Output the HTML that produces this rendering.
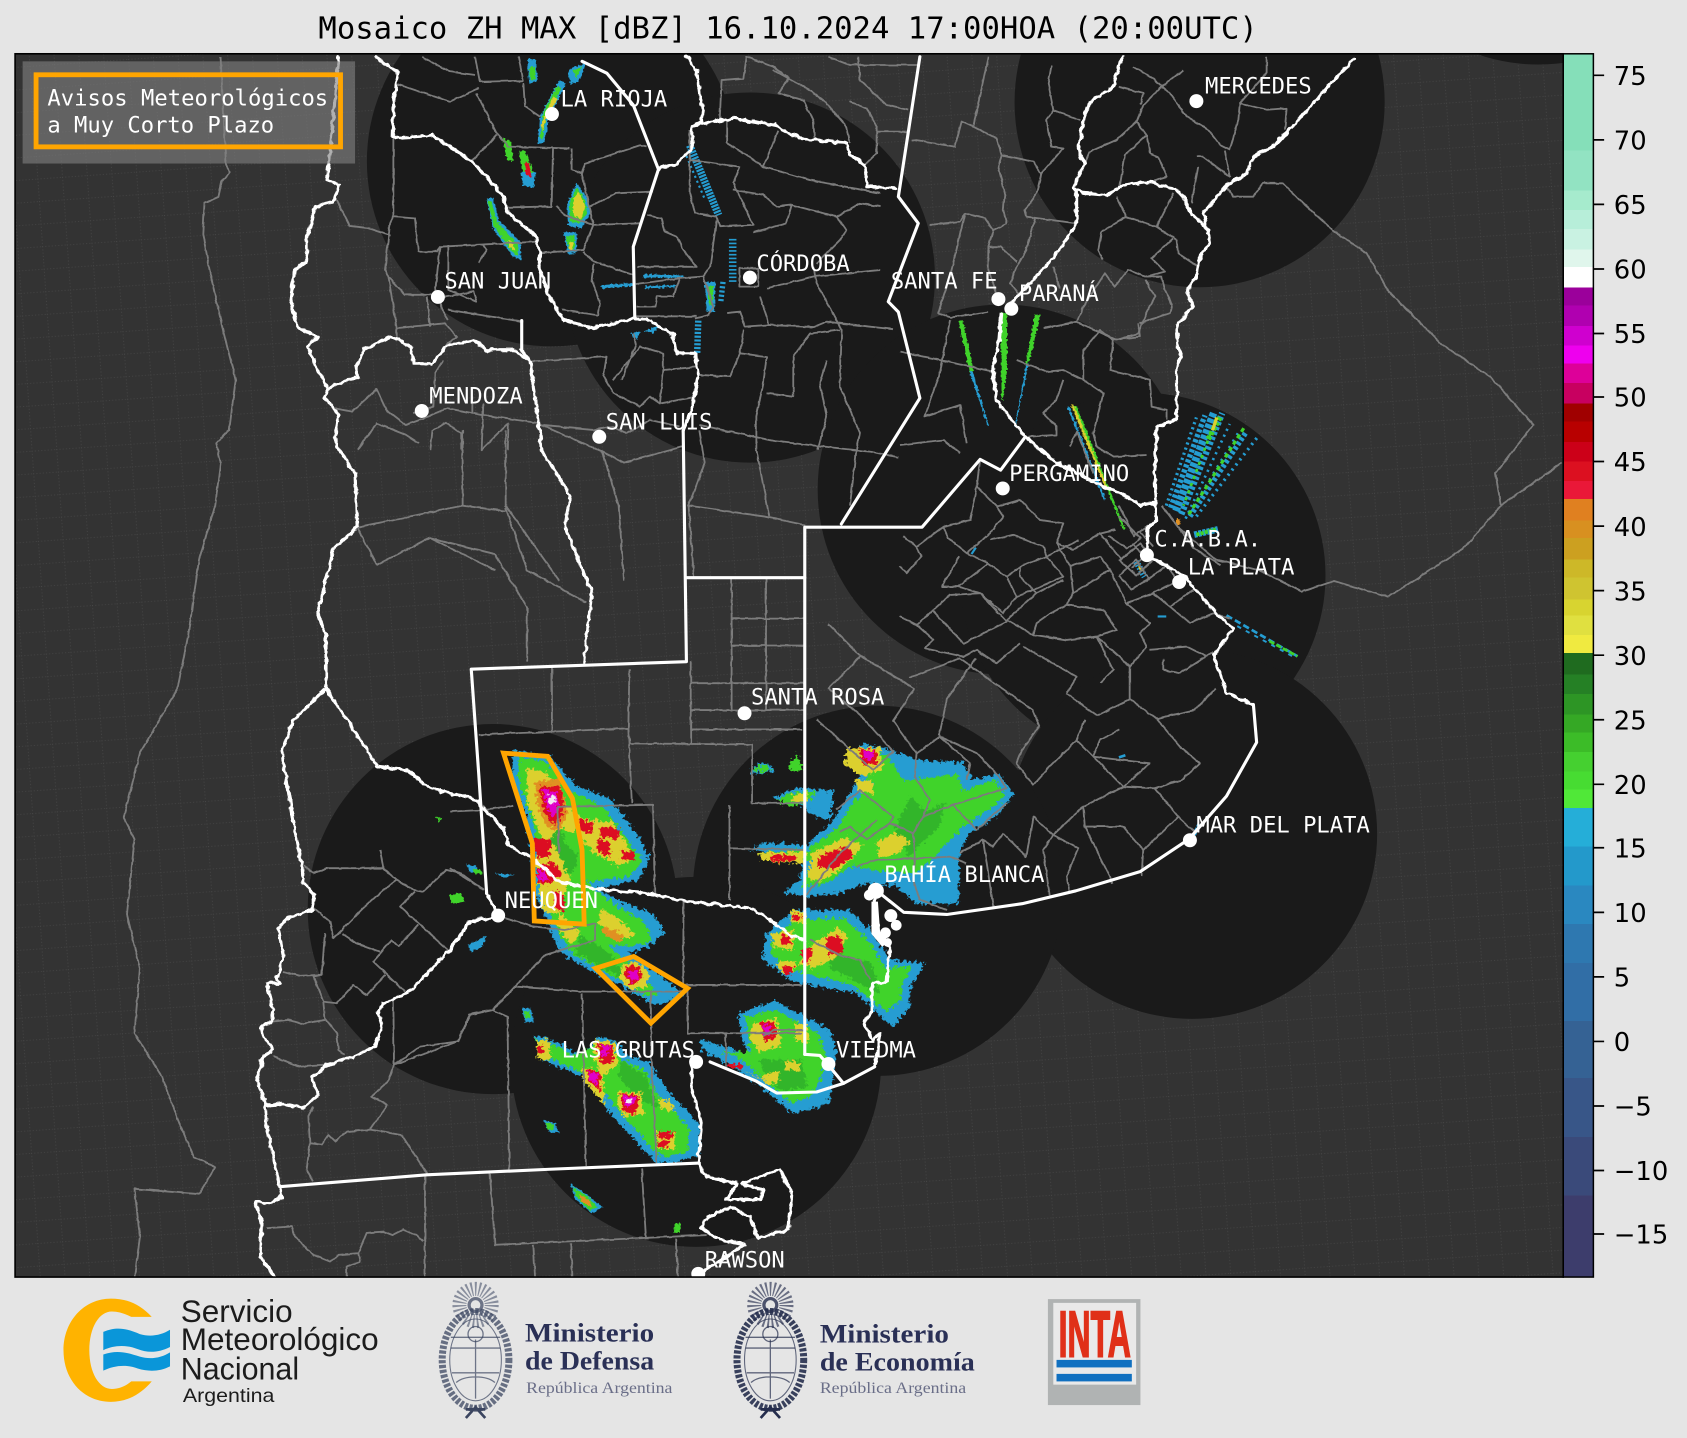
<!DOCTYPE html>
<html lang="es"><head><meta charset="utf-8"><title>Mosaico ZH MAX</title>
<style>
html,body{margin:0;padding:0;background:#e5e5e5;width:1687px;height:1438px;overflow:hidden}
svg{display:block;width:1687px;height:1438px}
.gray path{fill:none;stroke:#7c7c7c;stroke-width:1.7;stroke-linejoin:round}
.white path{fill:none;stroke:#fff;stroke-width:2.9;stroke-linejoin:round;stroke-linecap:round}
.lab{font-family:"DejaVu Sans Mono","Liberation Mono",monospace;font-size:20.6px;fill:#fff}
.tick{font-family:"DejaVu Sans","Liberation Sans",sans-serif;font-size:24px;fill:#000}
.b{fill:#259dd2}.bd{fill:#2b86bf}.g{fill:#3fd32c}.gm{fill:#33b52a}.d{fill:#2b8f28}.y{fill:#dcd02e}.o{fill:#e09020}.r{fill:#dc0a22}.m{fill:#e000c8}.w{fill:#f4e8f4}
.sb path{fill:none;stroke:#259dd2}.sg path{fill:none;stroke:#3fd32c}
</style></head><body>
<svg viewBox="0 0 1568 1336.6" xmlns="http://www.w3.org/2000/svg">
<defs>
<clipPath id="map"><rect x="14" y="50" width="1439" height="1137"/></clipPath>
<pattern id="grid" width="23" height="21" patternUnits="userSpaceOnUse" patternTransform="rotate(-4)">
<path d="M0,.5H23M.5,0V21" stroke="#484848" stroke-width=".7" stroke-dasharray="1 2" fill="none"/>
</pattern>
<filter id="rough" filterUnits="userSpaceOnUse" x="0" y="0" width="1568" height="1337">
<feTurbulence type="fractalNoise" baseFrequency=".3" numOctaves="3" seed="7"/>
<feDisplacementMap in="SourceGraphic" scale="9" xChannelSelector="R" yChannelSelector="G"/>
</filter>
<filter id="rough2" filterUnits="userSpaceOnUse" x="0" y="0" width="1568" height="1337">
<feTurbulence type="fractalNoise" baseFrequency=".5" numOctaves="1" seed="3"/>
<feDisplacementMap in="SourceGraphic" scale="4" xChannelSelector="R" yChannelSelector="G"/>
</filter>
<filter id="wig" filterUnits="userSpaceOnUse" x="0" y="0" width="1568" height="1337">
<feTurbulence type="fractalNoise" baseFrequency=".16" numOctaves="2" seed="11"/>
<feDisplacementMap in="SourceGraphic" scale="4.5" xChannelSelector="R" yChannelSelector="G"/>
</filter>
<filter id="wig2" filterUnits="userSpaceOnUse" x="0" y="0" width="1568" height="1337">
<feTurbulence type="fractalNoise" baseFrequency=".14" numOctaves="2" seed="5"/>
<feDisplacementMap in="SourceGraphic" scale="2.2" xChannelSelector="R" yChannelSelector="G"/>
</filter>
</defs>
<rect width="1568" height="1337" fill="#e5e5e5"/>
<g clip-path="url(#map)">
<rect x="14" y="50" width="1439" height="1137" fill="#333"/>
<rect x="14" y="50" width="1439" height="1137" fill="url(#grid)"/>
<g fill="#1a1a1a">
<circle cx="1115" cy="95" r="172"/><circle cx="1430" cy="-112" r="172"/><circle cx="513" cy="150" r="172"/>
<circle cx="697" cy="258" r="172"/><circle cx="932" cy="455" r="172"/><circle cx="1062" cy="535" r="170"/>
<circle cx="1108" cy="775" r="172"/><circle cx="816" cy="828" r="172"/><circle cx="458" cy="845" r="172"/>
<circle cx="647" cy="987" r="172"/>
</g>

<!-- radar echoes -->
<g filter="url(#rough)">
<!-- Neuquen main -->
<path class="b" d="M478,697 512,703 535,730 568,743 592,775 604,797 594,818 556,826 572,835 608,850 618,868 603,880 585,886 612,905 636,925 610,935 575,915 545,900 520,885 510,860 497,830 493,790 490,760 475,725Z"/>
<path class="g" d="M482,702 508,708 530,735 560,750 585,782 597,800 585,815 545,820 570,840 600,858 606,875 585,880 565,878 590,900 612,925 600,925 565,905 530,885 516,860 500,825 497,770 482,725Z"/>
<path class="gm" d="M515,760 530,790 525,815 507,810 505,770Z"/>
<path class="gm" d="M540,870 565,885 590,915 560,900 535,885Z"/>
<path class="y" d="M490,714 508,718 524,745 540,760 535,775 520,770 508,785 500,770 490,745Z"/>
<path class="y" d="M535,760 570,765 590,798 575,805 555,795 540,780Z"/>
<path class="y" d="M498,780 515,785 530,815 520,848 505,848 498,810Z"/>
<path class="gm" d="M525,785 538,795 532,812 524,808Z"/>
<path class="y" d="M560,845 580,858 590,870 575,872 556,858Z"/>
<path class="y" d="M520,848 540,868 530,878 518,860Z"/>
<path class="o" d="M497,727 520,724 528,755 520,772 508,768 500,750Z"/>
<path class="r" d="M501,730 522,732 524,755 516,768 506,755Z"/>
<path class="m" d="M504,733 518,736 519,752 514,760 508,750Z"/>
<path class="w" d="M510,738 516,740 516,748 510,748Z"/>
<path class="r" d="M538,762 552,764 550,775 538,772Z"/>
<path class="r" d="M558,768 576,770 574,780 558,778Z"/>
<path class="r" d="M555,780 566,782 568,796 556,792Z"/>
<path class="r" d="M578,790 590,792 590,800 578,798Z"/>
<path class="r" d="M496,778 512,782 510,798 498,796Z"/>
<path class="r" d="M498,808 514,800 522,812 510,822 500,820Z"/>
<path class="m" d="M500,810 508,808 508,818 500,818Z"/>
<path class="r" d="M515,828 525,832 524,848 515,844Z"/>
<path class="o" d="M560,860 580,870 575,876 560,868Z"/>
<!-- Cell B -->
<path class="y" d="M578,896 592,894 604,906 600,918 586,920 576,910Z"/>
<path class="r" d="M582,898 594,898 598,908 588,916 580,908Z"/>
<path class="m" d="M584,902 593,902 594,910 586,912Z"/>
<!-- Las Grutas -->
<path class="b" d="M496,962 523,970 539,982 557,964 572,968 583,980 604,988 620,1013 651,1046 651,1072 629,1081 610,1081 601,1072 570,1038 542,1001 505,986Z"/>
<path class="g" d="M498,966 520,973 533,982 560,968 570,972 578,985 598,994 612,1018 640,1048 640,1070 620,1076 608,1070 575,1032 550,1002 508,982Z"/>
<path class="gm" d="M578,985 600,1000 612,1030 590,1020 575,1000Z"/>
<path class="y" d="M553,966 572,970 574,990 560,1000 552,985Z"/>
<path class="y" d="M542,992 560,996 562,1028 552,1015 542,1005Z"/>
<path class="y" d="M575,1014 596,1016 598,1036 580,1038 574,1025Z"/>
<path class="y" d="M610,1052 628,1052 628,1068 612,1068Z"/>
<path class="y" d="M612,1020 626,1025 626,1033 614,1030Z"/>
<path class="y" d="M498,968 510,966 512,985 500,985Z"/>
<path class="r" d="M555,970 570,972 570,988 558,988Z"/>
<path class="m" d="M558,972 566,972 566,982 560,982Z"/>
<path class="r" d="M546,994 558,996 558,1014 548,1006Z"/>
<path class="m" d="M547,996 556,998 555,1008 549,1004Z"/>
<path class="r" d="M576,1016 594,1018 592,1032 590,1036 580,1034Z"/>
<path class="m" d="M578,1018 592,1020 588,1028 582,1030Z"/>
<path class="w" d="M581,1020 587,1022 586,1025 581,1024Z"/>
<path class="r" d="M612,1052 626,1052 626,1058 612,1058Z"/>
<path class="r" d="M612,1060 622,1062 618,1068 612,1066Z"/>
<path class="r" d="M500,972 505,972 505,978 500,978Z"/>
<!-- Viedma -->
<path class="b" d="M686,942 720,930 771,957 778,979 773,1010 770,1026 737,1035 703,1007 678,990 652,975 650,966 680,975 697,982 688,960Z"/>
<path class="g" d="M693,945 720,938 760,960 768,982 762,1005 755,1018 735,1025 710,1003 690,985 670,978 698,978 695,962Z"/>
<path class="gm" d="M705,985 745,985 750,1010 730,1015 712,1002Z"/>
<path class="y" d="M699,952 722,946 726,972 706,978 697,965Z"/>
<path class="y" d="M738,950 750,952 752,970 740,968Z"/>
<path class="y" d="M670,985 700,1000 715,1005 690,995Z"/>
<path class="y" d="M730,985 745,988 742,996 730,994Z"/>
<path class="y" d="M708,1000 725,995 724,1005 712,1008Z"/>
<path class="r" d="M706,950 720,950 722,964 710,968Z"/>
<path class="m" d="M708,953 716,953 716,961 710,962Z"/>
<path class="r" d="M676,988 690,990 690,994 678,992Z"/>
<!-- Bahia N -->
<path class="b" d="M802,691 827,697 852,706 895,709 905,725 929,719 942,739 926,759 901,775 892,793 891,840 852,840 833,824 805,821 781,830 750,833 728,830 743,818 748,795 697,790 710,783 750,785 775,762 785,745 800,720 785,708Z"/>
<path class="g" d="M803,695 825,702 840,725 890,720 895,735 925,725 935,740 920,752 893,770 865,800 850,812 820,810 790,805 770,820 745,825 755,800 720,800 705,792 750,790 778,770 793,745 812,730 800,715 787,708Z"/>
<path class="gm" d="M846,740 860,755 880,745 872,770 845,795 830,775Z"/>
<path class="y" d="M815,782 832,774 846,782 834,794 817,798Z"/>
<path class="y" d="M755,792 785,778 802,786 782,808 762,820 750,816Z"/>
<path class="y" d="M788,695 818,695 820,716 800,722 785,710Z"/>
<path class="y" d="M706,792 750,792 746,803 708,800Z"/>
<path class="r" d="M762,795 788,787 793,795 775,808 760,806Z"/>
<path class="r" d="M716,795 740,795 738,801 718,800Z"/>
<path class="r" d="M798,697 815,697 815,710 803,712Z"/>
<path class="m" d="M802,698 812,698 811,706 804,706Z"/>
<path class="y" d="M795,725 810,725 812,738 798,735Z"/>
<path class="b" d="M718,742 740,732 775,735 772,762 755,758 745,748Z"/>
<path class="g" d="M722,744 738,736 760,736 750,745 735,750Z"/>
<path class="y" d="M735,740 750,736 752,745 738,746Z"/>
<path class="b" d="M697,716 710,708 720,716 700,720Z"/>
<path class="g" d="M699,715 712,710 716,716 702,718Z"/>
<path class="g" d="M733,712 741,700 746,716 735,718Z"/>
<!-- Bahia S -->
<path class="b" d="M737,846 790,846 812,868 827,892 860,895 846,917 846,936 830,954 815,942 796,923 759,917 734,911 709,892 712,868Z"/>
<path class="g" d="M740,855 785,853 808,875 822,900 848,898 838,915 838,928 825,940 812,932 792,915 762,908 738,902 716,888 718,870Z"/>
<path class="gm" d="M770,885 810,895 818,925 795,912 772,900Z"/>
<path class="y" d="M752,880 778,862 788,870 778,890 755,900 742,896Z"/>
<path class="y" d="M716,868 738,865 738,883 720,880Z"/>
<path class="y" d="M735,846 750,848 748,858 735,858Z"/>
<path class="y" d="M722,894 740,894 738,906 726,904Z"/>
<path class="r" d="M768,872 782,870 784,886 770,888Z"/>
<path class="r" d="M725,870 735,868 736,878 726,878Z"/>
<path class="r" d="M745,882 755,882 752,895 745,893Z"/>
<path class="r" d="M727,898 738,898 736,906 728,905Z"/>
<path class="r" d="M736,850 746,850 745,855 737,855Z"/>
</g>
<g filter="url(#rough2)">
<path class="b" d="M433,803 442,805 445,810 437,811Z"/>
<path class="g" d="M418,832 428,830 432,838 420,840Z"/>
<path class="b" d="M435,878 452,870 448,880 438,885Z"/>
<path class="g" d="M405,759 411,761 408,765Z"/>
<path class="g" d="M440,808 446,808 448,812 441,812Z"/>
<path class="b" d="M460,812 478,813 470,816Z"/>
<path class="b" d="M485,936 494,938 496,950 488,950Z"/>
<path class="g" d="M487,940 492,940 493,946 488,946Z"/>
<path class="b" d="M505,1041 516,1044 520,1053 510,1052Z"/>
<path class="g" d="M507,1043 514,1045 515,1051 509,1050Z"/>
<path class="b" d="M530,1100 545,1110 560,1122 550,1128 535,1115Z"/>
<path class="g" d="M532,1103 546,1112 555,1122 548,1125 535,1112Z"/>
<path class="o" d="M538,1110 548,1116 550,1122 541,1117Z"/>
<path class="g" d="M627,1137 632,1137 632,1146 627,1146Z"/>
<!-- La Rioja / San Juan streaks -->
<path class="b" d="M490,55 498,55 500,75 492,78Z"/>
<path class="g" d="M492,62 497,62 498,74 493,74Z"/>
<path class="b" d="M528,65 545,58 538,76 530,78Z"/>
<path class="g" d="M532,66 541,62 536,72Z"/>
<path class="b" d="M520,74 526,78 510,110 506,132 500,134 502,108Z"/>
<path class="g" d="M518,80 522,82 508,108 504,130 502,128 505,104Z"/>
<path class="y" d="M514,90 518,92 507,112 504,122 503,116Z"/>
<path class="g" d="M467,128 475,132 477,150 471,148Z"/>
<path class="g" d="M482,140 488,140 496,160 496,170 488,170Z"/>
<path class="b" d="M484,160 498,160 496,175 486,172Z"/>
<path class="r" d="M488,150 492,152 494,165 489,162Z"/>
<path class="b" d="M527,190 536,170 546,185 549,198 540,212 528,210Z"/>
<path class="g" d="M529,190 536,174 544,186 546,198 538,208 530,206Z"/>
<path class="y" d="M533,185 538,178 544,192 540,204 533,200Z"/>
<path class="b" d="M524,216 536,216 536,235 528,236Z"/>
<path class="g" d="M526,220 534,218 534,232 529,232Z"/>
<path class="y" d="M529,225 533,225 532,232 529,232Z"/>
<path class="b" d="M452,184 458,184 464,205 484,225 484,242 476,238 458,212Z"/>
<path class="g" d="M453,186 457,188 462,206 482,228 481,238 474,232 459,210Z"/>
<path class="y" d="M472,222 477,226 478,232 473,230Z"/>
<path class="b" d="M558,265 588,263 588,266 560,268Z"/>
<path class="b" d="M598,255 636,256 636,258 598,258Z"/>
<path class="b" d="M600,266 628,265 628,267 600,268Z"/>
<path class="b" d="M655,262 665,262 664,290 657,290Z"/>
<path class="g" d="M658,266 663,266 662,284 659,284Z"/>
<path class="b" d="M598,308 612,303 608,310Z"/>
<path class="b" d="M586,310 595,308 592,316Z"/>
<!-- rays -->
<path class="g" d="M891,299 895,298 905,345 901,346Z"/>
<path class="b" d="M901,345 904,345 919,396 918,396Z"/>
<path class="g" d="M930,291 936,291 936,345 932,372 931,372Z"/>
<path class="g" d="M962,292 967,293 957,335 953,340Z"/>
<path class="b" d="M954,338 956,338 944,396 943,396Z"/>
<path class="g" d="M997,376 1001,378 1046,492 1044,492Z"/>
<path class="y" d="M995,376 998,376 1030,455 1028,455Z"/>
<path class="b" d="M992,378 994,378 1028,465 1026,465Z"/>
<path class="o" d="M1093,482 1097,482 1097,488 1093,488Z"/>
</g>
<!-- speckled fans -->
<g class="sb">
<path d="M641,135 668,200" stroke-width="7" stroke-dasharray="2 1"/>
<path d="M638,145 655,185" stroke-width="2" stroke-dasharray="2 3"/>
<path d="M681,222 681,262" stroke-width="7" stroke-dasharray="1.5 2"/>
<path d="M649,298 648,328" stroke-width="6" stroke-dasharray="2 1.5"/>
<path d="M672,262 670,280" stroke-width="5" stroke-dasharray="2 2"/>
<path d="M1084,470 1112,388" stroke-width="3" stroke-dasharray="2 3"/>
<path d="M1088,472 1120,386" stroke-width="5" stroke-dasharray="3 2"/>
<path d="M1093,475 1128,384" stroke-width="7" stroke-dasharray="4 1.5"/>
<path d="M1098,478 1136,384" stroke-width="6" stroke-dasharray="3 2"/>
<path d="M1102,482 1143,394" stroke-width="2.5" stroke-dasharray="2 4"/>
<path d="M1102,482 1152,400" stroke-width="2" stroke-dasharray="2 5"/>
<path d="M1106,480 1158,402" stroke-width="5" stroke-dasharray="3 2"/>
<path d="M1112,480 1169,406" stroke-width="3" stroke-dasharray="2 4"/>
<path d="M1110,497 1132,492" stroke-width="6" stroke-dasharray="3 1"/>
<path d="M1140,572 1206,610" stroke-width="2.5" stroke-dasharray="6 3"/>
<path d="M1150,582 1205,612" stroke-width="1.8" stroke-dasharray="4 5"/>
<path d="M1056,522 1064,536" stroke-width="6" stroke-dasharray="1.5 1.5"/>
<path d="M1076,573 1084,573" stroke-width="2"/><path d="M903,515 907,509" stroke-width="2"/><path d="M1040,704 1046,702" stroke-width="2.5"/><path d="M1110,776 1115,765" stroke-width="3.5" stroke-dasharray="3 1"/>
</g>
<g class="sg">
<path d="M1130,390 1100,470" stroke-width="2.5" stroke-dasharray="3 4"/>
<path d="M1134,388 1122,410" stroke-width="5" stroke-dasharray="3 2"/>
<path d="M1156,398 1105,478" stroke-width="3" stroke-dasharray="4 3"/>
<path d="M1112,497 1130,492" stroke-width="3.5" stroke-dasharray="3 1"/>
<path d="M1180,596 1206,610" stroke-width="2.5" stroke-dasharray="5 2"/>
</g>
<path d="M1131,388 1127,400" stroke="#dcd02e" stroke-width="3" fill="none"/>
<path d="M1059,526 1061,531" stroke="#dcd02e" stroke-width="2.5" fill="none"/>

<!-- gray outlines -->
<g class="gray" filter="url(#wig2)">
<!-- Chile coast -->
<path d="M205,53 210,152 213,160 206,169 203,183 190,189 188.5,217 196,257 208,310 219,353 213,400 201,412 205,430 200,470 185,520 175,590 165,640 130,700 115,760 125,780 118,850 130,900 125,960 150,1000 165,1040 180,1075 200,1085 185,1110 125,1105 130,1150 125,1187"/>
<path d="M313,186 325,210 342,212 363,219"/>
<!-- west top -->
<path d="M441.5,52.7 446,76 486.4,75 481.8,52.7"/><path d="M367,77.5 418,94.5 444.6,82"/><path d="M392,52.7 418,66.6 441.5,69.7"/>
<path d="M443,86.8 461.6,124 472.5,136.3 529.8,138"/><path d="M461.6,125.5 438.4,150"/><path d="M486.4,77.5 488,99 502,108.5"/>
<path d="M531.3,138 531.3,158 540.6,161 543.7,152 594.8,135 601,136"/><path d="M514,138 512.7,192 472.5,192.7"/>
<path d="M517,192 525,200 551.5,209 594.8,207.6"/><path d="M548.4,192 573,179.7 607,178"/><path d="M540.6,161 551.5,209 542,232.4 501.9,235"/>
<path d="M542,234 551.5,243 588.6,255.6"/><path d="M551.5,245 550,260 557.6,282 556,293 522,288"/>
<path d="M365.6,128.6 365.6,201.4 385.7,203 388.8,234 405.9,234 409,229.3 500.4,224.6"/>
<path d="M365.6,201.4 362.5,207.6 357.8,251 361,257 376.4,274 401,274"/>
<path d="M416.7,227.7 416.7,269.5 443,280.4 440,271 409,277"/><path d="M409,229 404.3,272.6"/><path d="M449,227.7 452.3,232.4 444.6,244.8"/>
<path d="M416.7,288 486.4,299"/><path d="M368.7,305 413.6,300.5 424.5,313 414,322"/><path d="M399.7,303.6 396.6,275.8"/><path d="M361,257 368.7,305 368.7,316"/>
<path d="M407.4,277 412,290 416.7,297.4"/><path d="M412,334.6 404.3,347 402.8,378 384,384"/>
<path d="M492.6,336 563.8,331.5 560.8,350 570,365.6 594.8,378 604,368.7 613.4,375 646,369"/>
<path d="M570,353 594.8,322 616.5,328.4 616.5,344 647.5,341"/><path d="M588.6,310 591,320 578,353"/><path d="M616.5,344 613.4,375"/>
<path d="M498.8,395 551.5,399.6 570,396.5 582.4,402.8 604,390.4 632,396.5"/><path d="M449.2,375 447.7,418 472.5,393.5 472,418"/>
<path d="M311,379.5 327,382.6 350,362 359,381 377,395 391,390 416,379.5 448,385.7 501.6,393.4"/>
<path d="M332.6,418 350,393.4 377,404 389.5,412"/><path d="M400,418 402,400 414.4,393 428.7,403 428.7,418"/><path d="M439,368.6 439,385"/>
<path d="M591.7,248 647.5,248 635,232.4 629,220 618,215.3 615,203 601,200"/>
<path d="M591,264 632,258.7 653.7,257"/><path d="M632,258.7 625.8,275.7 610.4,275.7 608.8,285 591.7,285"/><path d="M590,294 647.5,294"/>
<path d="M666,204.5 660,248 653.7,257 663,285 658,293 645.9,296"/>
<path d="M641,120.8 641,179.7 646,198 666,201.4 669,210.7 700,209 681.6,170.4 687.7,155 641,148.7"/>
<path d="M681.6,176.6 709.5,181 722,192 735.8,190.5 731,207.6 700,216"/><path d="M735.8,190.5 777.6,201.4 787,214 780.7,223 759,244.8"/>
<path d="M777.6,201.4 799.3,189 818,192"/><path d="M675.4,113 675.4,133 691,142.5 709.5,155 752.8,167.3 818,179.7"/><path d="M723.4,121 709.5,155"/>
<path d="M669,110 670.7,74.4 690.9,72.8 694,52.7"/><path d="M694,52.7 718.7,62 733,72 723.4,86.8 746.6,93 756,113 757,128"/>
<path d="M718.7,65 752.8,83.7 768.3,96 787,117.8 790,133"/><path d="M770,52.7 790,60.4 853.5,60.4"/>
<path d="M675.4,291 687.7,289.7 692.4,303.6 714,302 756,304 768.3,299 830,306"/><path d="M690.9,306.7 687.7,328.4 678.5,350 650.6,348.5"/>
<path d="M687.7,328.4 712.5,331.5 709.5,356 703,387 703,418"/><path d="M712.5,365.6 737.3,368.7 737.3,331.5 752.8,310 780.7,306.7"/>
<path d="M768.3,334.6 762,356 768.3,387 760,418"/><path d="M756,248 759,263.4 782.3,306.7 780.7,359.4 799.3,402.8 796,418"/>
<path d="M712.5,268 756,257 818,251"/><path d="M706.4,275.7 712.5,294 714,302"/>
<path d="M687.7,249.4H704.8V266.4H687.7Z"/>
<path d="M650,400 655,430 640,470 710,480 748,488"/><path d="M650,395 720,410 810,420 835,425"/><path d="M703,418 715,480"/><path d="M796,418 790,470"/>
<!-- NE -->
<path d="M797.7,52.7 799.3,74.4 824,97.6 844.2,102.3"/><path d="M790,94.5 805.5,100.7 814.8,117.8 814.8,142.5 804,153"/><path d="M814.8,122.4H844.2"/>
<path d="M847.3,130 887.6,136.3 893.8,113 904.6,117.8 926.3,128.6 931,144 927.9,155 934,179.7 932.5,195.2 935.6,207.6 923.2,213.8"/>
<path d="M904.6,117.8 918.6,52.7"/><path d="M931,144 960.4,150.3 968,162.7"/><path d="M864.3,209 892,206 896.9,198.3 915.5,203 923.2,213.8 918.6,229.3 918.6,251 926,272"/>
<path d="M896.9,198.3 883,257 872,291 884,295 918,290"/><path d="M918,229.3 930,229.3 945,243.2"/>
<path d="M977.4,60.4 974.3,77.5 979,102.3 972.8,111.6 977.4,136.3 988,138 968,161 963.5,179.7 952.6,195.2 954.2,201.4 1000.7,207.6"/>
<path d="M979,102.3 1003.8,111.6"/><path d="M962,203 954,232.4 945,248 938.7,263.4 951,277"/><path d="M979,247.9 985,268"/>
<path d="M1000.7,299 1006.9,285 1027,254 1036,266.5 1048.7,251 1064.2,257 1079.7,257 1082.8,269.5 1089,283.5 1087.4,291 1059.5,300.5"/>
<path d="M1064.2,260 1073.5,275.7 1065.7,291 1058,310 1037.8,316 1000.7,299 970,305"/>
<path d="M1025.4,241.7 1020.8,232.4 1024,215.3 1047,201.4 1075,210.7 1093.6,223 1095,235.5 1113.7,248"/><path d="M1047,201.4 1037.8,182.8"/><path d="M1075,210.7 1090.5,179.7"/>
<path d="M1090,222 1070.4,240 1082.8,252.5 1065,257"/>
<path d="M1053,62 1072,73 1087.4,86.8 1102.9,108.5 1123,120.8 1133.9,134.8 1143,139.4 1151,111.6 1152.4,96 1177.3,102 1195.8,100.7 1194.3,120.8"/>
<path d="M1177.3,52.7 1177.3,68 1152.4,96"/><path d="M1099.8,65 1078,82 1062.6,97.6 1056.4,113 1037.8,130 1013,141 1007,155"/>
<path d="M1039.4,80.6 1062.6,86.8 1060,97"/><path d="M1056.4,113 1065.7,125.5 1045.6,144 1041,172"/><path d="M1065.7,125.5 1068.8,142.5 1076.6,145.6 1084.3,164.2 1068.8,168.9"/>
<path d="M1112,145.6 1118,145.6 1143,164.2 1138,140"/><path d="M1113.7,155 1107.5,189"/>
<path d="M1140,173.5 1146.3,182.8 1164.8,182.8 1174,170.4 1192.7,170.4 1208,186 1240,215 1270,235 1290,270 1340,320 1385,350 1425,395 1390,440 1395,470 1452,430"/>
<path d="M1395,470 1360,510 1290,555 1240,540 1210,550 1170,530 1130,520 1095,490"/>
<!-- Santa Fe south / Pergamino -->
<path d="M883,297 873.7,347 859.7,387 892.3,376.4 898.5,412"/><path d="M836.5,326.8 873.7,334.6 923,345.4"/><path d="M836.5,413.6 876.8,409 892.3,421.3"/>
<path d="M945,334.6 972.8,345.4 988.3,344 1006.9,353 1006.9,325.3 1022.4,306.7 1034.8,316 1059.5,312.9 1058,300.5"/>
<path d="M1034.8,316 1031.7,343.9 1068.8,353 1070.4,378 1084.3,381 1084.3,390"/>
<path d="M1006.9,353 1025.5,365.5 1016,402.7 1019.3,415 1034.8,424.4 1065.7,422.9"/>
<path d="M988.3,353 982,371.7 969.7,384 982,396.5 982,404.3 953,406"/><path d="M994.5,415 1000.7,401 1016.2,440"/>
<path d="M1080,470 1110,510 1135,525"/>
<!-- BA partidos -->
<path d="M907.8,452.3 926.3,470.9 948,464.7 966.6,483.3 988.3,486.4 982,505 997.6,511.1 1022.4,495.7 1037,492"/>
<path d="M839.6,498.8 852,508 876.8,489.5 901.6,483.3 907.8,452.3 911,427"/><path d="M852,508 856.6,517.4 842.7,532.8 836,526"/>
<path d="M876.8,489.5 881.4,500.3 898.5,514.2 920.1,495.7 932.5,480.2 926.3,470.9"/><path d="M920,501.8 941.8,497.2 969.7,508 972.8,517.3 1003,502"/>
<path d="M898.5,514.2 918.6,523.5 890.7,545.2 875.2,545.2 892,517"/><path d="M918.6,523.5 935.6,536 944.9,554.5 932.5,570 910.8,551.4 890.7,545.2"/>
<path d="M867.5,566.9 883,553 910.8,551.4"/><path d="M867.5,566.9 852,580.8 836.5,573"/><path d="M867.5,568 895.4,597.9 935.6,577.8 910.8,551.4"/>
<path d="M852,580.8 867.5,594.8 859.7,602.5 895.4,610.3 907.8,604 926.3,616.5 948,597.9"/>
<path d="M935.6,536 948,526.6 972.8,517.3 988.3,536 944.9,554.5"/><path d="M948,526.6 948,536 963.5,551.4 988.3,539"/>
<path d="M963.5,551.4 935.6,576 960.4,590 963.5,579.3 979,568.4 991.4,562.2 1025.5,566.9"/><path d="M994.5,526.6 997.6,551.4 991.4,562"/>
<path d="M982,505 994.5,526.6 1022.4,517.4 1031.7,529.7 997.6,551.4"/>
<path d="M1025.5,566.9 1038,585.5 1019.3,591.7 1050.3,619.6 1065.7,601 1059.5,588.6 1068.8,579.3 1047,560.7 1031.7,529.7"/>
<path d="M1047,560.7 1072,551.4 1087.4,563.8 1109,548.3"/><path d="M960.4,590 991.4,594.8 1019.3,591.7 1034.8,622.7 1022.4,635"/>
<path d="M951,601 1000.7,628.9 991.4,644.3"/><path d="M1068.8,604 1103,601 1121.5,610.3"/><path d="M1087.4,563.8 1106,579.3 1127.7,570 1143,575"/>
<path d="M1081.2,613.4 1081.2,622.7 1096.7,625.8 1127.7,606"/><path d="M1050,620 1050,650 1075,668 1110,660 1130,640"/><path d="M991,645 1020,665 1050,650"/>
<path d="M1040,470 1054,498 1066,490"/><path d="M1030,498 1048,510 1060,500 1040,480"/><path d="M1022,495 1042,520 1060,505 1072,520 1056,535 1040,520"/><path d="M1040,535 1056,520 1068,538 1052,548 1040,535"/><path d="M1068,538 1085,525 1094,540 1072,551"/><path d="M1052,505 1064,517 1052,528"/><path d="M1060,495 1072,508"/>
<!-- BA south -->
<path d="M770,580 800,610 770,640 800,665 830,698.6 811.6,715.7 774,682 759,669"/><path d="M800,610 850,640 830,670 851.9,700 873.6,684.7 901.5,709.5 898.4,725"/>
<path d="M845,630 892,612 960,660 966,675 950,697 945,710"/><path d="M873.6,684.7 907.7,700 926,718.8 935.5,732.7 886,748 907.7,771.4 935.5,746.6"/><path d="M907,612 880,650 873,684"/>
<path d="M851.9,700 850.3,721.9 864.3,743.5 858,759 886,748"/><path d="M777.5,752.8 799.2,734.3 830,759 827,765.2 805.4,780.7 790,768.3 781,773"/>
<path d="M827,765.2 848.8,774.5 850.3,793 848.8,818 855,836.5 879.8,845.8"/><path d="M858,759 848.8,774.5"/><path d="M780.6,793 749.7,831.8"/><path d="M780.6,793 815,762"/>
<path d="M796,805.5 814.7,799.3 850,798 882.9,796.2 898.4,802.4"/><path d="M752.8,873.7 780.6,887.6 799.2,892.2 808.5,910.8"/>
<path d="M746.6,957.3H718.7L709.4,963.5"/><path d="M697,960.4H718"/><path d="M913.8,780.7 923.2,842.7"/>
<path d="M892,793 913.8,780.7 923,787 932.4,774.5 954,796.2 960.3,759 979,776"/>
<path d="M944.8,709.5 960.3,729.6 972.7,715.7 1000.6,687.8 1008.3,669"/><path d="M1000.6,687.8 1044,731.2 1006.8,749.7 979,776 1002,788.5 991.3,814.8 994.4,830.3"/>
<path d="M979,776 969.6,790 975.8,833.4"/><path d="M1006.8,749.7 1008.3,768.3 1031.6,814.8 1034,822"/>
<path d="M1044,731.2 1073.4,732.7 1095,759 1062.6,790 1044,768.3 1008.3,768.3"/><path d="M1062.6,790 1061,814.8"/>
<path d="M1044,731.2 1068.7,709.5 1016,703.3 1022.3,687.8 1040.9,678.5"/><path d="M1073.4,732.7 1098,725 1115.2,709.5 1096.6,694 1075,668"/><path d="M1095,759 1112,774.5"/>
<!-- Mendoza / San Luis south -->
<path d="M503,395 560,420 580,430 635,415"/><path d="M560,420 575,470 580,540"/><path d="M470,400 470,470 520,540"/><path d="M332,490 430,470 470,475"/><path d="M430,470 430,400"/>
<path d="M332,490 350,525 400,500 460,515 490,565 490,615"/><path d="M400,500 460,530"/><path d="M470,472 490,530 545,560"/>
<path d="M640,470 645,537"/>
<!-- La Pampa -->
<path d="M445,683 584,677 585.5,691 699,692 699,746.6"/><path d="M745.6,678H642.4V669"/><path d="M642.4,691V669M642,615V669"/><path d="M513,620 513,680"/><path d="M585,622 584,677"/><path d="M642,635H748"/>
<path d="M680,537V660"/><path d="M712,537V660"/><path d="M680,575H748M680,600H748"/><path d="M642,660H748"/>
<path d="M587.3,746.6 584,677"/><path d="M518,750 607,748 608.6,833.4"/><path d="M678,748 678,836.5"/><path d="M678,788.5 747,790"/><path d="M699,746.6H747"/><path d="M519.7,793 518,750"/><path d="M418,754.4 446.7,753 477,749"/>
<!-- Rio Negro / Neuquen -->
<path d="M635.3,836.5 635,915.5 745.6,915.5"/><path d="M639,915 639,960.4 745,960.4"/><path d="M674.4,960.4 675,991.5"/>
<path d="M553.5,858 553.5,873.7 507,887.6 457.4,938.7 436,943 425.4,968 366.2,989.8"/><path d="M478.8,917 542.8,921.7 635.3,921.7"/><path d="M457.4,938.7 471.7,945 473.4,1087.4"/><path d="M541,923.2 544.6,1084.3"/><path d="M605,921.7 605,979 610.4,1081"/>
<path d="M418,807 450,827"/><path d="M463,851 494.8,861 525,864.4 553.5,858"/>
<path d="M282,804 291.3,811.7 303.7,807 356.3,807 353.2,790"/><path d="M356,807 368.7,818 384.2,827 393,829 415,808.6 427.6,811.7 449.2,827"/>
<path d="M368.7,818 356.3,827 337.7,844 309.8,872 306.7,856.6 291.3,844"/><path d="M385.7,828.7 371.8,842.7 418.3,884.5"/><path d="M388.8,859.7 370.3,879.8 364,873.6 347,893.8 376.5,921.7"/>
<path d="M317.6,867.4 331.5,876.7 353.2,884.5"/><path d="M357.9,906 340.8,924.8 328.4,915.5 313,932.5 300.5,931 291.3,907.7 299,906 302,867.4"/>
<path d="M263.4,903 278.9,907 299,906"/><path d="M300.5,931 302,946.4 313,960.4 314.5,976 320.7,980.5"/><path d="M252.5,949.5 268,948 280.4,951.7 302,948"/><path d="M254,982 278.9,991.4 306.7,989.8"/>
<path d="M365.6,929.4 366.2,989.8 390.4,972.8 426,968 436.9,943.3 458.5,938.7"/><path d="M458.5,938.7 478.7,916.4"/><path d="M366.2,989.8 361,1005.3 345.5,1019 360,1027 344,1050 322.2,1051.8 311.4,1061 305.2,1055 299,1064 288,1062.6 286.6,1037.8 291.3,1028.5"/>
<path d="M288,1062.6 285,1087.4 291.3,1098"/><path d="M344,1050 373.4,1055 396.6,1090.5"/>
<!-- Chubut -->
<path d="M395,1092V1187"/><path d="M455.4,1090.5 460,1157 656.8,1148"/><path d="M495.7,1157 497.3,1187"/><path d="M530.4,1155.6 532,1187"/><path d="M596.4,1086 600.4,1151"/><path d="M628,1151 630,1187"/>
<path d="M247.9,1141.6 271.1,1140 274.2,1149 291.3,1166.4 306.7,1172.6 314.5,1166.4 333,1164.8 340.8,1146 356.3,1144.7 365,1148 375,1143 387.3,1148 393.5,1154"/>
<path d="M333,1164.8 334.6,1172.6 322.2,1177 322.2,1187"/>
</g>

<!-- white outlines: natural (wiggly) -->
<g class="white" filter="url(#wig)">
<path d="M349,53 370,68 366,93 365,127 372,128 402,126 423,139 441,152 466,180 473,198 498,220 502,235 501,248 511,277 523.6,297.4 551.5,305 588.6,296 601,296 625.8,311.4 629,328.4 646,328.4 649,348.5 643,381 635,400"/>
<path d="M484.9,325.3 492.6,336 497,365.6 502,402.8 503,418 530,460 525,490 550,550 543,615"/>
<path d="M315,53 306,149 304,167 315,172 310,187 293,192 285,223 285,242 274,251 270,279 277,305 295,313 286,322 293,339 304,359 302,369 315,387 311,406 315,418 330,440 332,490 310,510 303,540 295,570 303,590 303,640 330,680 350,712 378,716 400,733 440,742 468,770 472,785 498,800 520,820 552,826 600,830 640,838 697,844 715.7,855 737,871 748,873.7"/>
<path d="M304,362 311,358 333,350 331,341 338,325 363,313 382,322 384,338 402,338 414,322 441,316 452,325 477,325 493,336"/>
<path d="M303,640 272,670 262,700 277.3,790 280.4,802.4 282,821 292.8,831.8 289.7,845.8 268,853.5 258.7,862.8 263.4,889 257.2,909 260,914 247.9,914 254,938.7 252.5,949.5 243.2,954 244.8,963.5 254,976 244.8,982 238.6,1003.8 246.3,1025.4 247.9,1047 252.5,1068.8 258.7,1096.7 261.8,1112 251,1118.4 237,1116.8 243.2,1134 241.7,1168 255.6,1186.5"/>
<path d="M452.3,830 463.2,852 436.9,856.6 418.3,883 402.8,898.4 381,921.7 356.3,932.5 351.7,941.8 354.8,952.6 348.6,972.8 328.4,982 303.7,989.8 289.7,1002 296,1017.7 282,1030 263.4,1026 247.9,1027"/>
<path d="M612,157 629,152 643,138 643,117 681.6,110 718.7,116 743.5,128.6 787,133 790,144 804,153.4 805.5,173.5 831.8,175"/>
<path d="M638,52.7 647.5,65 650.6,90 653.7,102 652,113 643,117"/>
<path d="M935.6,286.6 979,240 1000.7,207.6 1000.7,182.8 997.6,173.5 1008.4,151.8 1002,139.4 1008.4,105.4 1014.6,93 1034.7,80.6 1039.4,62 1044,52.7"/>
<path d="M1000.7,176.6 1006.9,179.7 1028.5,181.3 1044,172 1068.8,168.9 1096.7,178 1107.5,198.3 1123,213.8 1124.6,226 1115.3,238.6 1112,257 1102.9,271 1109,285 1093.6,302 1095,325 1098,331.5 1094,341 1094,390 1075,397 1073,440 1075,483"/>
<path d="M1121.5,210.7 1118.4,198.3 1138.5,173.5 1158.7,161 1164.8,145.6 1183.4,136.3 1208.2,110 1235,80 1258,55"/>
<path d="M931,291 929,316 923,341 926,372 953,406 963.5,415 982,430 1019,449 1047,461.6 1060,469 1073.6,467.7 1075,483 1067,490 1066,516 1100,535 1130,570 1146,584 1128,610 1140,644 1165,655"/>
<path d="M643,988 643,1013 652,1044 649,1081 657,1094 685,1100 675.4,1115 706.4,1115 709.6,1106 689.4,1100 725,1087 736,1109 732.7,1143 705,1151 697,1131 678.5,1121.6 654,1134 652,1141.6 669,1152.5 692,1157 657,1180 649,1183"/>
<path d="M813,829 811.7,861 827,880 824,914 811,914 810,941.7 802,951 811.6,967 818,960 813,991.5"/>
</g>
<!-- white outlines: smooth / straight -->
<g class="white">
<path d="M635,400 638,615 438,622 445,720 452.3,830"/>
<path d="M484.9,298 484.9,325.3"/>
<path d="M260,1103 396.6,1092 511,1086.8 650,1081"/>
<path d="M541,57 564,68 588.6,97.6 612,157.4 588.6,229.3 590,296"/>
<path d="M855,52.7 835,182.8 853.5,207.6 825.6,280.4 835,290 855,370 782,487"/>
<path d="M638,537H748"/><path d="M748,980V490H857L911,427 930,437 953,406"/>
<path d="M1165,655 1168,690 1140,740 1105,780 1060,810 1000,828 950,840 880,850 840,848 815,828"/>
<path d="M813,991.5 784,1007 759,1015 722,1016 703,1005 660,987"/>
<path d="M748,980 762,981 770,990 784,1007"/>
</g>
<g fill="#fff">
<circle cx="808" cy="832" r="5"/>
<circle cx="828" cy="851" r="6"/><circle cx="833" cy="860" r="5"/><circle cx="823" cy="867" r="5"/><circle cx="815" cy="860" r="3"/><circle cx="825" cy="876" r="4"/>
<path d="M810,838 816,838 818,866 825,876 820,880 810,868Z"/>
</g>

<!-- warnings -->
<g fill="none" stroke="#ffa500" stroke-width="4.5" stroke-linejoin="miter">
<path d="M468,700 509,703 532,742 541,790 543,859 496.6,856 494.8,784Z"/>
<path d="M553.5,900 589,889 639,918.6 605,951Z"/>
</g>

<!-- city dots -->
<g fill="#fff">
<circle cx="513" cy="106" r="6.5"/><circle cx="1112" cy="94" r="6.5"/><circle cx="407" cy="276" r="6.5"/><circle cx="697" cy="258" r="6.5"/><circle cx="928" cy="278" r="6.5"/><circle cx="940" cy="287" r="6.5"/><circle cx="392" cy="382" r="6.5"/><circle cx="557" cy="406" r="6.5"/><circle cx="932" cy="454" r="6.5"/><circle cx="1066" cy="516" r="6.5"/><circle cx="1096" cy="541" r="6.5"/><circle cx="692" cy="663" r="6.5"/><circle cx="1106" cy="781" r="6.5"/><circle cx="814" cy="828" r="7.5"/><circle cx="463" cy="851" r="6.5"/><circle cx="647" cy="987" r="6.5"/><circle cx="770" cy="989" r="6.5"/><circle cx="649" cy="1184" r="6.5"/>
</g>
<g class="lab">
<text x="521" y="99">LA RIOJA</text>
<text x="1120" y="87">MERCEDES</text>
<text x="413" y="268">SAN JUAN</text>
<text x="703" y="252">CÓRDOBA</text>
<text x="828" y="268">SANTA FE</text>
<text x="947" y="280">PARANÁ</text>
<text x="399" y="375">MENDOZA</text>
<text x="563" y="399">SAN LUIS</text>
<text x="938" y="447">PERGAMINO</text>
<text x="1073" y="508">C.A.B.A.</text>
<text x="1104" y="534">LA PLATA</text>
<text x="698" y="655">SANTA ROSA</text>
<text x="1112" y="774">MAR DEL PLATA</text>
<text x="822" y="820">BAHÍA BLANCA</text>
<text x="469" y="844">NEUQUEN</text>
<text x="522" y="983">LAS GRUTAS</text>
<text x="777" y="983">VIEDMA</text>
<text x="655" y="1178">RAWSON</text>
</g>
<!-- Avisos -->
<rect x="21" y="57" width="309" height="95" fill="#808080" fill-opacity=".62"/>
<rect x="33.5" y="69.5" width="283" height="67" fill="none" stroke="#ffa500" stroke-width="4.5"/>
<text class="lab" x="44" y="98" textLength="261">Avisos Meteorológicos</text>
<text class="lab" x="44" y="123">a Muy Corto Plazo</text>
</g>
<rect x="14" y="50" width="1439" height="1137" fill="none" stroke="#000" stroke-width="1.5"/>

<!-- colorbar -->
<g shape-rendering="crispEdges">
<rect x="1453" y="50" width="28" height="90" fill="#85dfb9"/>
<rect x="1453" y="140" width="28" height="37" fill="#92e3c2"/>
<rect x="1453" y="177" width="28" height="18" fill="#a6ebcd"/>
<rect x="1453" y="195" width="28" height="18" fill="#b7eed9"/>
<rect x="1453" y="213" width="28" height="19" fill="#c9f2e2"/>
<rect x="1453" y="232" width="28" height="16" fill="#e0f6ec"/>
<rect x="1453" y="248" width="28" height="19" fill="#fff"/>
<rect x="1453" y="267" width="28" height="17" fill="#9b009b"/>
<rect x="1453" y="284" width="28" height="19" fill="#b000b0"/>
<rect x="1453" y="303" width="28" height="18" fill="#cf00cf"/>
<rect x="1453" y="321" width="28" height="17" fill="#ee00ee"/>
<rect x="1453" y="338" width="28" height="18" fill="#dd0099"/>
<rect x="1453" y="356" width="28" height="19" fill="#c80060"/>
<rect x="1453" y="375" width="28" height="17" fill="#a00000"/>
<rect x="1453" y="392" width="28" height="19" fill="#b80000"/>
<rect x="1453" y="411" width="28" height="18" fill="#cc0018"/>
<rect x="1453" y="429" width="28" height="18" fill="#dc1020"/>
<rect x="1453" y="447" width="28" height="17" fill="#ea1838"/>
<rect x="1453" y="464" width="28" height="20" fill="#e08020"/>
<rect x="1453" y="484" width="28" height="16" fill="#d89020"/>
<rect x="1453" y="500" width="28" height="20" fill="#cca020"/>
<rect x="1453" y="520" width="28" height="17" fill="#cdb828"/>
<rect x="1453" y="537" width="28" height="20" fill="#cfc430"/>
<rect x="1453" y="557" width="28" height="15" fill="#d8d430"/>
<rect x="1453" y="572" width="28" height="18" fill="#e0e040"/>
<rect x="1453" y="590" width="28" height="17" fill="#f0ea40"/>
<rect x="1453" y="607" width="28" height="20" fill="#1f6b1f"/>
<rect x="1453" y="627" width="28" height="18" fill="#258025"/>
<rect x="1453" y="645" width="28" height="19" fill="#2d9525"/>
<rect x="1453" y="664" width="28" height="17" fill="#35a825"/>
<rect x="1453" y="681" width="28" height="18" fill="#3cbc28"/>
<rect x="1453" y="699" width="28" height="18" fill="#45d030"/>
<rect x="1453" y="717" width="28" height="17" fill="#47dc32"/>
<rect x="1453" y="734" width="28" height="17" fill="#50e838"/>
<rect x="1453" y="751" width="28" height="36" fill="#25aed8"/>
<rect x="1453" y="787" width="28" height="36" fill="#2399cb"/>
<rect x="1453" y="823" width="28" height="36" fill="#2a88c0"/>
<rect x="1453" y="859" width="28" height="36" fill="#2e78b0"/>
<rect x="1453" y="895" width="28" height="54" fill="#316ea6"/>
<rect x="1453" y="949" width="28" height="53" fill="#356294"/>
<rect x="1453" y="1002" width="28" height="55" fill="#385688"/>
<rect x="1453" y="1057" width="28" height="54" fill="#3a4a7a"/>
<rect x="1453" y="1111" width="28" height="76" fill="#3d3d6c"/>
</g>
<rect x="1453" y="50" width="28" height="1137" fill="none" stroke="#000" stroke-width="1.4"/>
<g stroke="#000" stroke-width="1.6">
<path d="M1481,70h10M1481,130h10M1481,190h10M1481,250h10M1481,310h10M1481,369h10M1481,429h10M1481,489h10M1481,549h10M1481,609h10M1481,669h10M1481,729h10M1481,788h10M1481,848h10M1481,908h10M1481,968h10M1481,1028h10M1481,1088h10M1481,1147h10"/>
</g>
<g class="tick">
<text x="1500" y="79">75</text><text x="1500" y="139">70</text><text x="1500" y="199">65</text><text x="1500" y="259">60</text><text x="1500" y="319">55</text><text x="1500" y="378">50</text><text x="1500" y="438">45</text><text x="1500" y="498">40</text><text x="1500" y="558">35</text><text x="1500" y="618">30</text><text x="1500" y="678">25</text><text x="1500" y="738">20</text><text x="1500" y="797">15</text><text x="1500" y="857">10</text><text x="1500" y="917">5</text><text x="1500" y="977">0</text><text x="1500" y="1037">−5</text><text x="1500" y="1097">−10</text><text x="1500" y="1156">−15</text>
</g>
<!-- title -->
<text x="732.5" y="36" text-anchor="middle" font-family="'DejaVu Sans Mono','Liberation Mono',monospace" font-size="28.45" fill="#000">Mosaico ZH MAX [dBZ] 16.10.2024 17:00HOA (20:00UTC)</text>

<!-- SMN logo -->
<path d="M141,1224 C130,1212 118,1207 103,1207 C78,1207 59,1228 59,1255 C59,1283 78,1303 103,1303 C118,1303 131,1296 141,1284 L122,1284 C116,1289 110,1291 104,1291 C92,1291 83,1276 83,1255 C83,1234 92,1219 104,1219 C110,1219 116,1221 122,1224Z" fill="#ffb300"/>
<path d="M96,1238 C110,1232 120,1236 130,1240 C140,1243 150,1241 158,1236 L158,1252 C148,1257 138,1258 128,1254 C118,1250 106,1250 96,1255Z" fill="#0a96d9"/>
<path d="M96,1259 C110,1254 120,1258 130,1261 C140,1264 150,1262 158,1257 L158,1270 C148,1275 138,1275 128,1272 C118,1268 106,1269 96,1274Z" fill="#0a96d9"/>
<g font-family="'Liberation Sans',sans-serif" fill="#1c1c1c">
<text x="168" y="1229" font-size="29" textLength="104" lengthAdjust="spacingAndGlyphs">Servicio</text>
<text x="168" y="1255" font-size="29" textLength="184" lengthAdjust="spacingAndGlyphs">Meteorológico</text>
<text x="168" y="1282" font-size="29" textLength="110" lengthAdjust="spacingAndGlyphs">Nacional</text>
<text x="170" y="1303" font-size="18" textLength="85" lengthAdjust="spacingAndGlyphs">Argentina</text>
</g>
<!-- escudos -->
<g fill="none" stroke="#3b4560">
<g>
<ellipse cx="442" cy="1264" rx="31" ry="45" stroke-width="6.5" stroke-dasharray="3 1.5" opacity=".75"/>
<ellipse cx="442" cy="1264" rx="24" ry="38" stroke-width="1" opacity=".7"/>
<path d="M419,1253H465M419,1243H465M420,1276H464M442,1245V1300M424,1285C432,1278 452,1278 460,1285" stroke-width="1.2" opacity=".7"/>
<circle cx="442" cy="1240" r="7" stroke-width="1.2" opacity=".7"/>
<circle cx="442" cy="1213" r="15" stroke-width="13" stroke-dasharray="1.5 2" opacity=".55"/>
<circle cx="442" cy="1213" r="6" stroke-width="3" opacity=".7"/>
<path d="M433,1318 442,1308 451,1318M433,1310H451" stroke-width="2.5"/>
</g>
<g stroke="#252d4d">
<ellipse cx="716" cy="1264" rx="31" ry="45" stroke-width="6.5" stroke-dasharray="3 1.5" opacity=".9"/>
<ellipse cx="716" cy="1264" rx="24" ry="38" stroke-width="1" opacity=".7"/>
<path d="M693,1253H739M693,1243H739M694,1276H738M716,1245V1300M698,1285C706,1278 726,1278 734,1285" stroke-width="1.2" opacity=".7"/>
<circle cx="716" cy="1240" r="7" stroke-width="1.2" opacity=".7"/>
<circle cx="716" cy="1213" r="15" stroke-width="13" stroke-dasharray="1.5 2" opacity=".65"/>
<circle cx="716" cy="1213" r="6" stroke-width="3" opacity=".8"/>
<path d="M707,1318 716,1308 725,1318M707,1310H725" stroke-width="2.5"/>
</g>
</g>
<g font-family="'Liberation Serif',serif" font-weight="bold" fill="#2a3056">
<text x="488" y="1247" font-size="25" textLength="120" lengthAdjust="spacingAndGlyphs">Ministerio</text>
<text x="488" y="1273" font-size="25" textLength="120" lengthAdjust="spacingAndGlyphs">de Defensa</text>
<text x="762" y="1248" font-size="25" textLength="120" lengthAdjust="spacingAndGlyphs">Ministerio</text>
<text x="762" y="1274" font-size="25" textLength="144" lengthAdjust="spacingAndGlyphs">de Economía</text>
</g>
<g font-family="'Liberation Serif',serif" fill="#6a6e88" font-size="15">
<text x="489" y="1295" textLength="136" lengthAdjust="spacingAndGlyphs">República Argentina</text>
<text x="762" y="1295" textLength="136" lengthAdjust="spacingAndGlyphs">República Argentina</text>
</g>
<!-- INTA -->
<rect x="974" y="1207.5" width="86" height="98.5" fill="#b0b3b3"/>
<rect x="979" y="1211" width="77" height="76" fill="#e9e9e9"/>
<text x="984" y="1261" font-family="'Liberation Sans',sans-serif" font-weight="bold" font-size="60" fill="#e03018" stroke="#e03018" stroke-width="1.8" textLength="67" lengthAdjust="spacingAndGlyphs">INTA</text>
<rect x="982" y="1264" width="70" height="7" fill="#1070c0"/>
<rect x="982" y="1277" width="70" height="7" fill="#1070c0"/>
</svg>
</body></html>
